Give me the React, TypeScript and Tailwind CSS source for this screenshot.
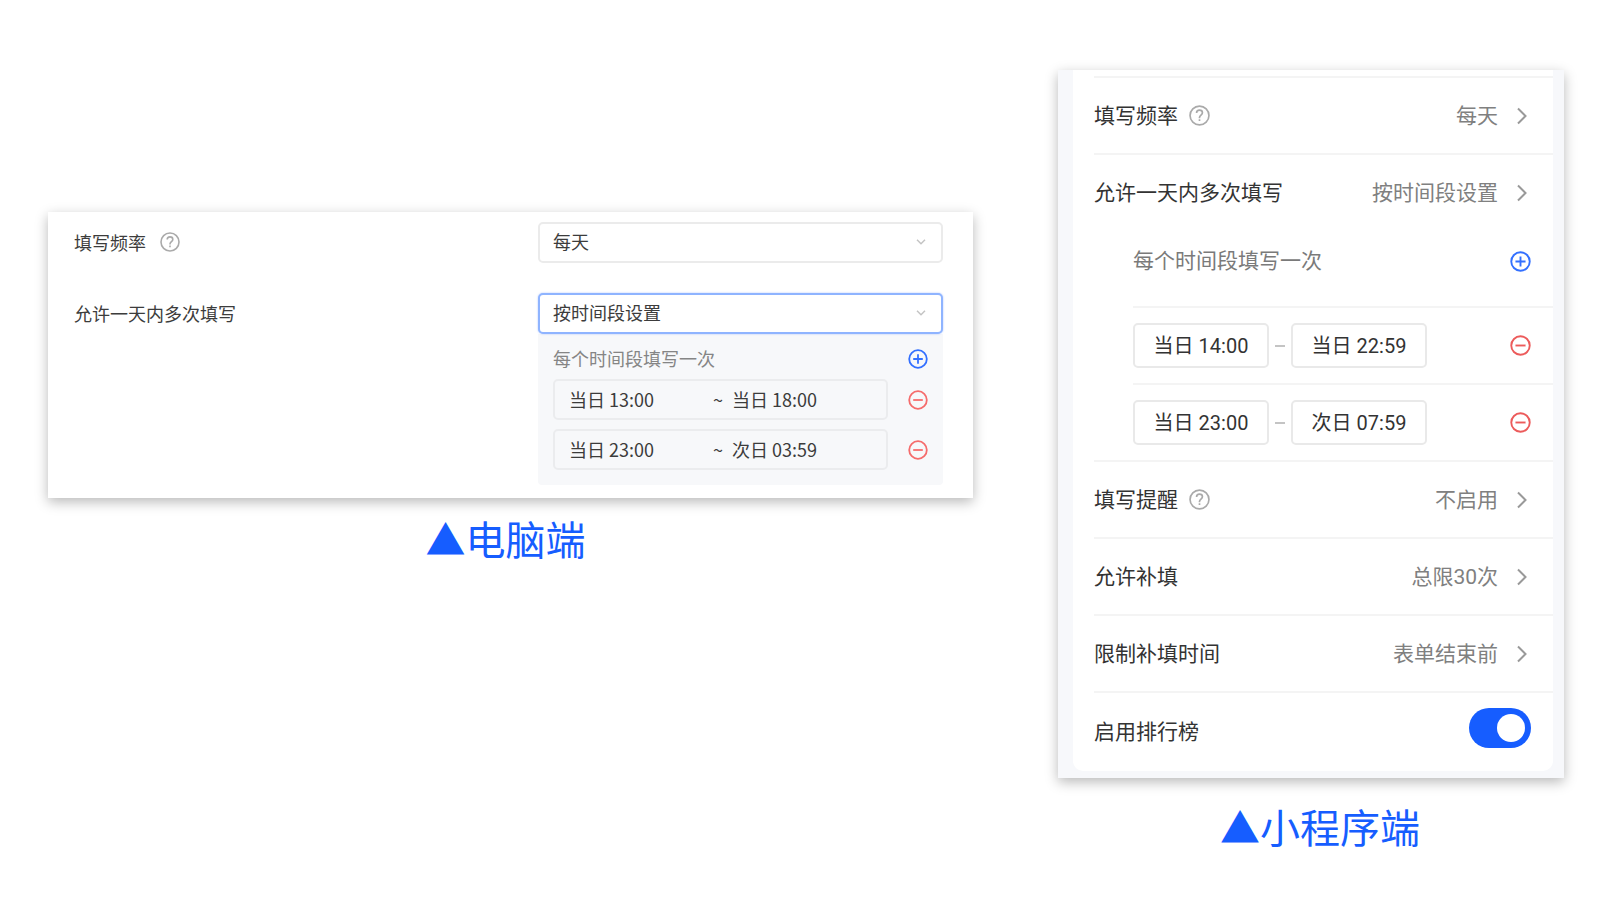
import { ReactNode, useState } from 'react';

type Slot = { id: number; from: string; to: string };

const DESKTOP_SLOTS: Slot[] = [
  { id: 1, from: '当日 13:00', to: '当日 18:00' },
  { id: 2, from: '当日 23:00', to: '次日 03:59' },
];

const MOBILE_SLOTS: Slot[] = [
  { id: 1, from: '当日 14:00', to: '当日 22:59' },
  { id: 2, from: '当日 23:00', to: '次日 07:59' },
];

export default function App() {
  return (
    <main className="grid min-h-screen grid-cols-[925fr_506fr] items-start gap-[85px] bg-white pt-[70px] pr-9 pl-12">
      <figure className="pt-[142px]">
        <DesktopPanel />
        <figcaption className="mt-[10px] pr-[10px] text-center font-['Noto_Sans_CJK_SC',sans-serif] text-[40px] leading-[60px] text-[#165dff]">
          ▲电脑端
        </figcaption>
      </figure>
      <figure>
        <MobilePanel />
        <figcaption className="mt-[18px] pl-[18px] text-center font-['Noto_Sans_CJK_SC',sans-serif] text-[40px] leading-[60px] text-[#165dff]">
          ▲小程序端
        </figcaption>
      </figure>
    </main>
  );
}

function DesktopPanel() {
  const [slots, setSlots] = useState(DESKTOP_SLOTS);

  return (
    <section className="bg-white pt-[10px] pr-[30px] pb-[13px] pl-[26px] font-['Noto_Sans_CJK_SC',sans-serif] text-[18px] text-[#3c3c3c] shadow-[0_4px_12px_rgba(0,0,0,0.28)]">
      <div className="grid grid-cols-[minmax(0,464fr)_minmax(0,405fr)]">
        <div className="flex h-10 items-center gap-[14px]">
          <label htmlFor="frequency">填写频率</label>
          <HelpButton />
        </div>
        <SelectBox id="frequency" options={['每天', '每周', '每月']} />
      </div>

      <div className="mt-[30px] grid grid-cols-[minmax(0,464fr)_minmax(0,405fr)]">
        <label htmlFor="multiple" className="flex h-10 items-center">
          允许一天内多次填写
        </label>
        <div>
          <SelectBox id="multiple" options={['按时间段设置', '不允许']} active />
          <div className="rounded-b bg-[#f7f8fa] px-[15px] pb-[15px]">
            <div className="flex h-[45px] items-center justify-between pt-1 text-[#858585]">
              <span>每个时间段填写一次</span>
              <button
                type="button"
                aria-label="添加"
                className="text-[#3370ff]"
                onClick={() =>
                  setSlots((s) => [...s, { id: Date.now(), from: '当日 00:00', to: '当日 23:59' }])
                }
              >
                <CircleIcon plus />
              </button>
            </div>
            <div className="space-y-[9px]">
              {slots.map((s) => (
                <div key={s.id} className="flex items-center gap-5">
                  <div className="flex h-[41px] min-w-0 flex-1 items-center rounded-[5px] border-2 border-[#ebecee] px-[14px]">
                    <input
                      aria-label="开始时间"
                      defaultValue={s.from}
                      className="w-[144px] min-w-0 bg-transparent outline-none"
                    />
                    <span className="w-[19px] shrink-0">~</span>
                    <input
                      aria-label="结束时间"
                      defaultValue={s.to}
                      className="w-0 flex-1 bg-transparent outline-none"
                    />
                  </div>
                  <button
                    type="button"
                    aria-label="删除"
                    className="text-[#f56c6c]"
                    onClick={() => setSlots((all) => all.filter((x) => x.id !== s.id))}
                  >
                    <CircleIcon />
                  </button>
                </div>
              ))}
            </div>
          </div>
        </div>
      </div>
    </section>
  );
}

function SelectBox({ id, options, active }: { id: string; options: string[]; active?: boolean }) {
  return (
    <div className="relative">
      <select
        id={id}
        className={`block h-[41px] w-full appearance-none rounded-[5px] border-2 bg-white pr-10 pb-[2px] pl-[13px] outline-none ${
          active ? 'border-[#8fb4ff] shadow-[0_0_2px_rgba(51,112,255,0.4)]' : 'border-[#ebebeb]'
        }`}
      >
        {options.map((o) => (
          <option key={o}>{o}</option>
        ))}
      </select>
      <svg
        viewBox="0 0 10 6"
        className="pointer-events-none absolute top-[17px] right-[17px] h-[6px] w-[10px] text-[#c4c4c4]"
        fill="none"
        stroke="currentColor"
        strokeWidth="1.5"
      >
        <path d="M1 .8 5 4.8 9 .8" />
      </svg>
    </div>
  );
}

function MobilePanel() {
  const [slots, setSlots] = useState(MOBILE_SLOTS);
  const [ranking, setRanking] = useState(true);

  return (
    <section className="bg-[#f7f8fb] pr-[11px] pb-[7px] pl-[15px] font-[Roboto,'Noto_Sans_CJK_SC',sans-serif] text-[21px] text-[#333] shadow-[0_4px_12px_rgba(0,0,0,0.28)]">
      <div className="rounded-b-[10px] bg-white pl-[21px]">
        <div className="h-2 border-b-2 border-[#f4f4f4]" />
        <Row label="填写频率" value="每天" help divider />
        <Row label="允许一天内多次填写" value="按时间段设置" />

        <div className="pl-[39px]">
          <div className="border-b-2 border-[#f4f4f4] pb-[15px]">
            <div className="flex h-[60px] items-center justify-between pr-[22px] text-[#7a7a7a]">
              <span className="pt-[2px]">每个时间段填写一次</span>
              <button
                type="button"
                aria-label="添加"
                className="text-[#3370ff]"
                onClick={() =>
                  setSlots((s) => [...s, { id: Date.now(), from: '当日 00:00', to: '当日 23:59' }])
                }
              >
                <CircleIcon plus large />
              </button>
            </div>
          </div>
          {slots.map((s, i) => (
            <div
              key={s.id}
              className={`flex h-[77px] items-center border-b-2 pr-[22px] ${
                i < slots.length - 1 ? 'border-[#f4f4f4]' : 'border-transparent'
              }`}
            >
              <TimeButton>{s.from}</TimeButton>
              <span className="mx-[6px] h-[2px] w-[10px] bg-[#c4c4c4]" />
              <TimeButton>{s.to}</TimeButton>
              <button
                type="button"
                aria-label="删除"
                className="ml-auto text-[#ec5b5b]"
                onClick={() => setSlots((all) => all.filter((x) => x.id !== s.id))}
              >
                <CircleIcon large />
              </button>
            </div>
          ))}
        </div>
        <div className="-mt-[2px] border-b-2 border-[#f4f4f4]" />

        <Row label="填写提醒" value="不启用" help divider />
        <Row label="允许补填" value="总限30次" divider />
        <Row label="限制补填时间" value="表单结束前" divider />

        <div className="flex h-[78px] items-start justify-between pt-[15px] pr-[22px]">
          <label htmlFor="ranking" className="leading-[48px]">
            启用排行榜
          </label>
          <span className="relative inline-flex h-10 w-[62px]">
            <input
              id="ranking"
              type="checkbox"
              role="switch"
              checked={ranking}
              onChange={(e) => setRanking(e.target.checked)}
              className="peer h-10 w-[62px] appearance-none rounded-full bg-[#d0d3d9] checked:bg-[#165dff]"
            />
            <span className="pointer-events-none absolute top-[6px] left-[6px] size-7 rounded-full bg-white peer-checked:left-[28px]" />
          </span>
        </div>
      </div>
    </section>
  );
}

type RowProps = { label: string; value: string; help?: boolean; divider?: boolean };

function Row({ label, value, help, divider }: RowProps) {
  return (
    <div
      className={`flex items-center justify-between pr-[22px] ${
        divider ? 'h-[77px] border-b-2 border-[#f4f4f4]' : 'h-[76px]'
      }`}
    >
      <div className="flex items-center gap-[11px]">
        <span className="pt-[2px]">{label}</span>
        {help && <HelpButton large />}
      </div>
      <button type="button" className="flex items-center gap-[13px] text-[#808080]">
        <span className="pt-[2px]">{value}</span>
        <svg viewBox="0 0 20 20" className="size-5" fill="none" stroke="#999" strokeWidth="2">
          <path d="m7 2.5 7.5 7.5L7 17.5" />
        </svg>
      </button>
    </div>
  );
}

function TimeButton({ children }: { children: ReactNode }) {
  return (
    <button type="button" className="h-[45px] w-[136px] rounded-[5px] border-2 border-[#e9e9e9] text-[20px]">
      {children}
    </button>
  );
}

function HelpButton({ large }: { large?: boolean }) {
  return (
    <button type="button" aria-label="帮助" className="text-[#aaa]">
      <svg
        viewBox="0 0 20 20"
        className={large ? 'size-[21px]' : 'size-5'}
        fill="none"
        stroke="currentColor"
        strokeWidth="1.6"
      >
        <circle cx="10" cy="10" r="9" />
        <path d="M7.2 7.6C7.2 5.8 8.4 4.9 10 4.9s2.8 1 2.8 2.5c0 2.2-2.8 2.3-2.8 4.6v.5M10 13.6v1.6" />
      </svg>
    </button>
  );
}

function CircleIcon({ plus, large }: { plus?: boolean; large?: boolean }) {
  return (
    <svg
      viewBox="0 0 20 20"
      className={large ? 'size-[21px]' : 'size-5'}
      fill="none"
      stroke="currentColor"
      strokeWidth="1.8"
    >
      <circle cx="10" cy="10" r="8.8" />
      <path d={plus ? 'M5.2 10h9.6M10 5.2v9.6' : 'M5.2 10h9.6'} />
    </svg>
  );
}
